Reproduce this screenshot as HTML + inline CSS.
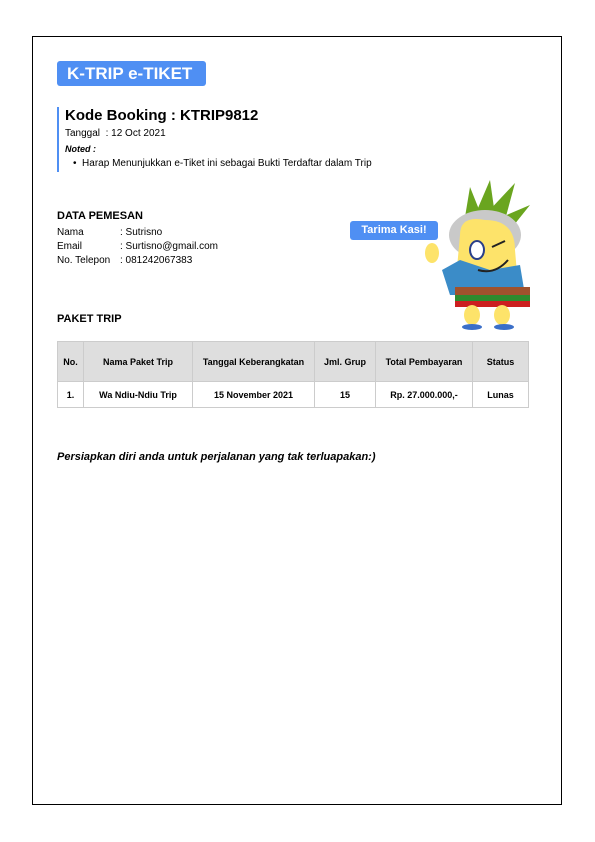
<!DOCTYPE html>
<html><head><meta charset="utf-8"><style>
*{margin:0;padding:0;box-sizing:border-box}
body{width:595px;height:842px;background:#fff;font-family:"Liberation Sans",Arial,sans-serif;color:#000;position:relative;overflow:hidden}
.page{position:absolute;left:32px;top:36px;width:530px;height:769px;border:1px solid #000}
.abs{position:absolute;white-space:nowrap}
.title{left:57px;top:61px;width:149px;height:25px;background:#4f8ff3;border-radius:3px;color:#fff;font-weight:bold;font-size:17px;line-height:25px;padding-left:10px}
.bar{left:57px;top:107px;width:2px;height:65px;background:#4f8ff3}
table{position:absolute;left:57px;top:341px;border-collapse:collapse;font-size:9px;font-weight:bold}
td{border:1px solid #ccc;text-align:center;vertical-align:middle}
tr.h td{background:#dedede;height:40px}
tr.b td{height:26px}
</style></head><body>
<div class="page"></div>
<div class="abs title">K-TRIP e-TIKET</div>
<div class="abs bar"></div>
<div class="abs" style="left:65px;top:107px;font-size:15px;font-weight:bold">Kode Booking : KTRIP9812</div>
<div class="abs" style="left:65px;top:128px;font-size:10px">Tanggal&nbsp; : 12 Oct 2021</div>
<div class="abs" style="left:65px;top:144px;font-size:9px;font-weight:bold;font-style:italic">Noted :</div>
<div class="abs" style="left:73px;top:158px;font-size:10px">•&nbsp; Harap Menunjukkan e-Tiket ini sebagai Bukti Terdaftar dalam Trip</div>
<div class="abs" style="left:57px;top:210px;font-size:11px;font-weight:bold">DATA PEMESAN</div>
<div class="abs" style="left:57px;top:226px;font-size:10px;line-height:14px">Nama<br>Email<br>No. Telepon</div>
<div class="abs" style="left:120px;top:226px;font-size:10px;line-height:14px">: Sutrisno<br>: Surtisno@gmail.com<br>: 081242067383</div>
<div class="abs" style="left:350px;top:221px;width:88px;height:19px;background:#4f8ff3;border-radius:3px;color:#fff;font-weight:bold;font-size:11px;line-height:19px;text-align:center">Tarima Kasi!</div>
<svg class="abs" style="left:420px;top:175px" width="115" height="160" viewBox="0 0 115 160">
<g fill="#6aa51f"><path d="M55 40 L70 5 L75 40Z"/><path d="M65 40 L95 8 L85 45Z"/><path d="M75 45 L110 30 L90 55Z"/><path d="M45 42 L50 12 L62 42Z"/></g>
<ellipse cx="65" cy="60" rx="36" ry="25" fill="#c9c9c9"/>
<path d="M40 60 Q40 40 65 45 Q95 45 95 75 L98 110 L35 115 Z" fill="#fde36a"/>
<path d="M22 95 L40 85 L70 95 L100 90 L105 120 L30 120Z" fill="#3b8cc8"/>
<rect x="35" y="112" width="75" height="8" fill="#a0522d"/>
<rect x="35" y="120" width="75" height="6" fill="#2e8b2e"/>
<rect x="35" y="126" width="75" height="6" fill="#cc1f1f"/>
<ellipse cx="52" cy="140" rx="8" ry="10" fill="#fde36a"/><ellipse cx="82" cy="140" rx="8" ry="10" fill="#fde36a"/>
<ellipse cx="52" cy="152" rx="10" ry="3" fill="#3b6fc8"/><ellipse cx="84" cy="152" rx="10" ry="3" fill="#3b6fc8"/>
<ellipse cx="12" cy="78" rx="7" ry="10" fill="#fde36a"/>
<ellipse cx="57" cy="75" rx="7" ry="9" fill="#fff" stroke="#2a3f8a" stroke-width="2"/>
<path d="M72 72 L85 66" stroke="#222" stroke-width="2"/>
<path d="M58 95 Q75 100 88 85" stroke="#222" stroke-width="2" fill="none"/>
</svg>
<div class="abs" style="left:57px;top:313px;font-size:11px;font-weight:bold">PAKET TRIP</div>
<table>
<tr class="h"><td style="width:26px">No.</td><td style="width:109px">Nama Paket Trip</td><td style="width:122px">Tanggal Keberangkatan</td><td style="width:61px">Jml. Grup</td><td style="width:97px">Total Pembayaran</td><td style="width:56px">Status</td></tr>
<tr class="b"><td>1.</td><td>Wa Ndiu-Ndiu Trip</td><td>15 November 2021</td><td>15</td><td>Rp. 27.000.000,-</td><td>Lunas</td></tr>
</table>
<div class="abs" style="left:57px;top:451px;font-size:11px;font-weight:bold;font-style:italic">Persiapkan diri anda untuk perjalanan yang tak terluapakan:)</div>
</body></html>
